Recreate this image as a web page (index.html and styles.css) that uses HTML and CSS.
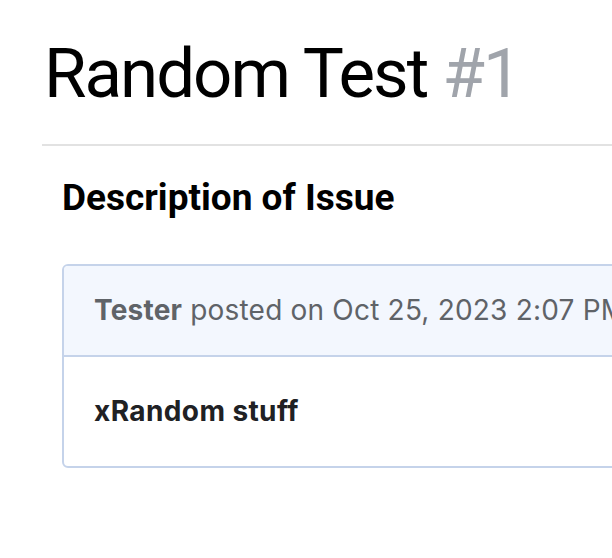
FILE: index.html
```html
<!DOCTYPE html>
<html>
<head>
<meta charset="utf-8">
<link rel="stylesheet" href="styles.css">
</head>
<body>
<div class="page">
  <h1 class="title">Random Test <span class="num">#1</span></h1>
  <div class="content">
    <h2 class="section">Description of Issue</h2>
    <div class="card">
      <div class="card-head"><strong class="author">Tester</strong> posted on Oct 25, 2023 2:07 PM</div>
      <div class="card-body">xRandom stuff</div>
    </div>
  </div>
</div>
</body>
</html>
```
FILE: styles.css
```css
html, body {
  margin: 0;
  padding: 0;
  background: #fff;
  overflow: hidden;
}
body {
  font-family: Roboto, "Liberation Sans", sans-serif;
  width: 612px;
  height: 558px;
}
.page {
  padding: 26px 0 0 42px;
}
.title {
  margin: 0;
  padding: 0 0 22px 2px;
  font-size: 69px;
  font-weight: 400;
  letter-spacing: -2px;
  line-height: 96px;
  color: #000;
  border-bottom: 2px solid #e2e2e2;
  white-space: nowrap;
}
.num {
  color: #a0a4ab;
}
.content {
  padding-left: 20px;
}
.section {
  margin: 0;
  padding-top: 28px;
  font-size: 37px;
  font-weight: 700;
  line-height: 48px;
  color: #000;
}
.card {
  margin-top: 42px;
  width: 600px;
  border: 2px solid #c5d3ea;
  border-radius: 6px;
  white-space: nowrap;
}
.card-head {
  background: #f3f7fe;
  border-bottom: 2px solid #c5d3ea;
  height: 89px;
  line-height: 89px;
  padding-left: 30px;
  font-family: Inter, Roboto, sans-serif;
  font-size: 28px;
  letter-spacing: 0.2px;
  color: #5f6368;
  border-radius: 4px 4px 0 0;
}
.author {
  font-weight: 700;
}
.card-body {
  height: 109px;
  line-height: 109px;
  padding-left: 30px;
  font-family: Inter, Roboto, sans-serif;
  font-size: 28px;
  letter-spacing: 0.4px;
  font-weight: 700;
  color: #202124;
}
```
